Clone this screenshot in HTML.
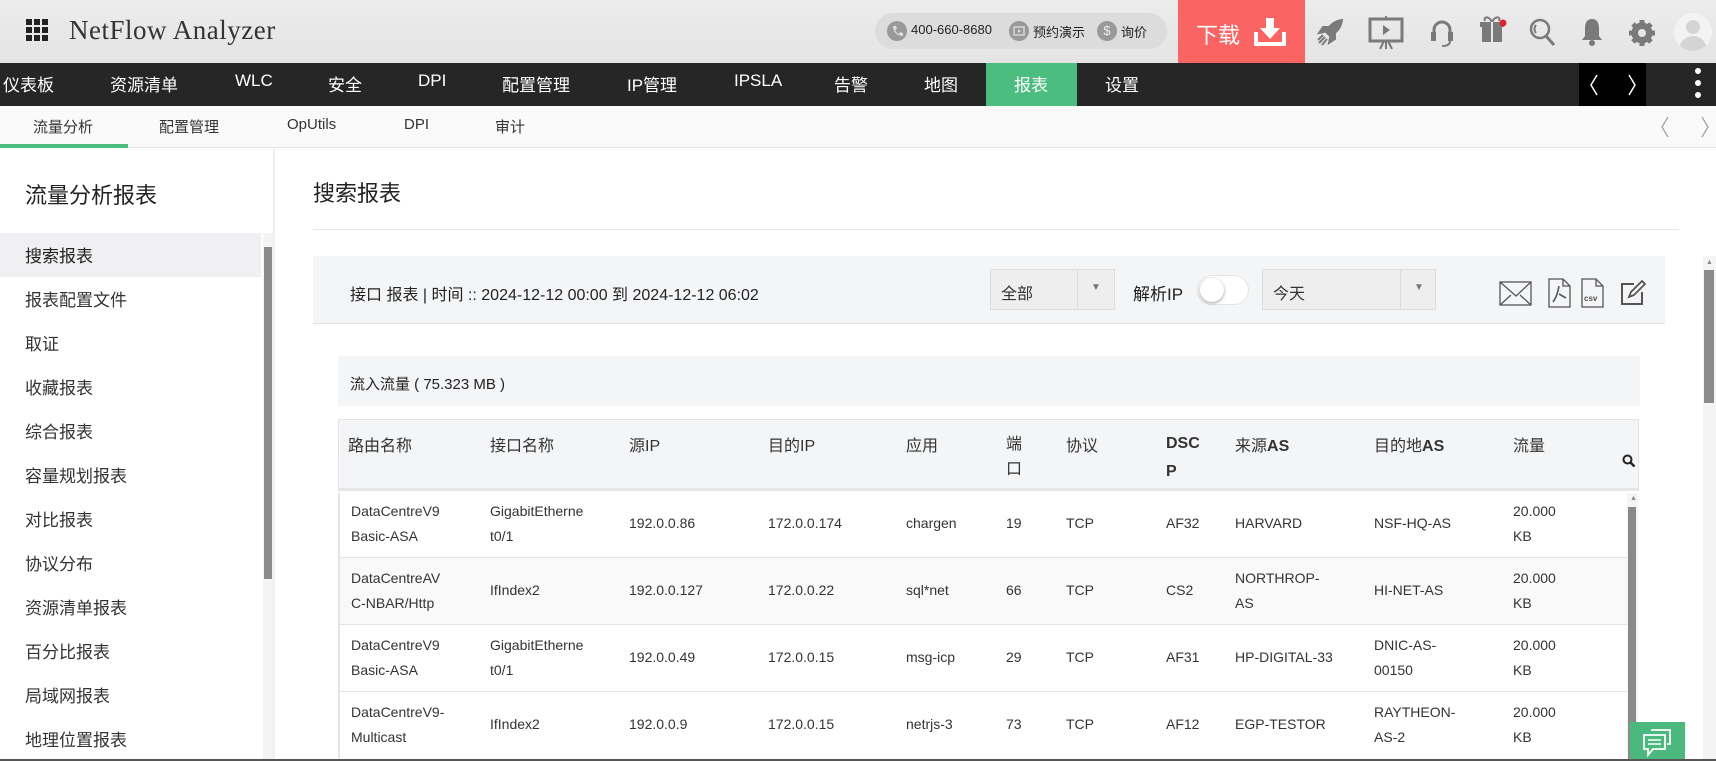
<!DOCTYPE html>
<html><head><meta charset="utf-8">
<style>
*{margin:0;padding:0;box-sizing:border-box}
body{width:1716px;height:761px;overflow:hidden;position:relative;background:#fff;font-family:"Liberation Sans","Noto Sans CJK SC",sans-serif;color:#333}
.a{position:absolute;white-space:nowrap}
#hdr{left:0;top:0;width:1716px;height:63px;background:linear-gradient(#ececec,#e4e4e4)}
#nav{left:0;top:63px;width:1716px;height:43px;background:#262626}
#nav .a{color:#fff;font-size:17px;top:8px}
#sub{left:0;top:106px;width:1716px;height:42px;background:#fafafa;border-bottom:1px solid #e6e6e6}
#sub .a{font-size:15px;top:10px;color:#333}
.side{font-size:17px;color:#333;left:25px}
.th{font-size:16px;color:#333}
.td{font-size:14px;color:#333;line-height:25px}
.ic{fill:#7a7a7a}
</style></head><body>
<div id="hdr" class="a"></div>
<svg class="a" style="left:26px;top:19px" width="22" height="22"><g fill="#222"><rect x="0" y="0" width="6" height="6"/><rect x="8" y="0" width="6" height="6"/><rect x="16" y="0" width="6" height="6"/><rect x="0" y="8" width="6" height="6"/><rect x="8" y="8" width="6" height="6"/><rect x="16" y="8" width="6" height="6"/><rect x="0" y="16" width="6" height="6"/><rect x="8" y="16" width="6" height="6"/><rect x="16" y="16" width="6" height="6"/></g></svg>
<div class="a" style="left:69px;top:15px;font-size:27px;color:#333;font-family:'Liberation Serif',serif;letter-spacing:0.5px">NetFlow Analyzer</div>
<div class="a" style="left:875px;top:13px;width:292px;height:36px;border-radius:18px;background:#dcdcdc"></div>
<div class="a" style="left:887px;top:21px;width:20px;height:20px;border-radius:10px;background:#999"></div>
<svg class="a" style="left:890px;top:24px" width="14" height="14"><path d="M3 2l3 0 1 3-2 1c1 2 2 3 4 4l1-2 3 1v3c-6 0-10-4-10-10z" fill="#ddd"/></svg>
<div class="a" style="left:911px;top:22px;font-size:13px;color:#222">400-660-8680</div>
<div class="a" style="left:1009px;top:21px;width:20px;height:20px;border-radius:10px;background:#999"></div>
<svg class="a" style="left:1013px;top:25px" width="12" height="12"><rect x="1" y="2" width="10" height="8" fill="none" stroke="#ddd" stroke-width="1.4"/><path d="M5 4v4l3-2z" fill="#ddd"/></svg>
<div class="a" style="left:1033px;top:22px;font-size:13px;color:#222">预约演示</div>
<div class="a" style="left:1097px;top:21px;width:20px;height:20px;border-radius:10px;background:#999;color:#eee;font-size:13px;text-align:center;line-height:20px">$</div>
<div class="a" style="left:1121px;top:22px;font-size:13px;color:#222">询价</div>
<div class="a" style="left:1178px;top:0;width:127px;height:63px;background:#fa6462"></div>
<div class="a" style="left:1196px;top:18px;font-size:22px;color:#fff">下载</div>
<svg class="a" style="left:1254px;top:16px" width="32" height="30"><path d="M2 16v12h28V16" stroke="#fff" stroke-width="4" fill="none"/><path d="M12 2h8v10h6l-10 11-10-11h6z" fill="#fff"/></svg>
<svg class="a" style="left:1316px;top:18px" width="28" height="28"><path class="ic" d="M26 2c-8 1-13 6-16 12l4 4c6-3 11-8 12-16zM8 14l-5 1 4-6 6 0zM14 20l-1 5 6-4 0-6zM9 19l-6 6M11 21l-5 6M7 17l-5 5" stroke="#7a7a7a" stroke-width="2"/></svg>
<svg class="a" style="left:1368px;top:16px" width="36" height="34"><rect x="2" y="3" width="32" height="22" fill="none" stroke="#7a7a7a" stroke-width="3"/><path d="M15 9v10l7-5z" class="ic"/><path d="M18 0v3M18 25v8M12 33l4-8M24 33l-4-8" stroke="#7a7a7a" stroke-width="2"/></svg>
<svg class="a" style="left:1429px;top:18px" width="26" height="30"><path d="M5 16v-4a8 8 0 0116 0v4" stroke="#7a7a7a" stroke-width="3" fill="none"/><rect x="2" y="14" width="5" height="9" class="ic"/><rect x="19" y="14" width="5" height="9" class="ic"/><path d="M21 23c0 4-4 5-8 5" stroke="#7a7a7a" stroke-width="2" fill="none"/></svg>
<svg class="a" style="left:1479px;top:14px" width="28" height="30"><rect x="3" y="12" width="20" height="16" class="ic"/><rect x="1" y="8" width="24" height="5" class="ic"/><path d="M13 8c-3-6-9-6-7-1M13 8c3-6 9-6 7-1" stroke="#7a7a7a" stroke-width="2" fill="none"/><rect x="12" y="8" width="2" height="20" fill="#e8e8e8"/><circle cx="24" cy="9" r="3.5" fill="#e0222a"/></svg>
<svg class="a" style="left:1529px;top:18px" width="28" height="30"><circle cx="11" cy="11" r="9" fill="none" stroke="#7a7a7a" stroke-width="2.5"/><path d="M17 18l8 9" stroke="#7a7a7a" stroke-width="3"/><path d="M7 7a6 6 0 000 8" stroke="#7a7a7a" stroke-width="2" fill="none"/></svg>
<svg class="a" style="left:1580px;top:17px" width="24" height="30"><path class="ic" d="M12 2c-5 0-7 4-7 9v8l-3 4h20l-3-4v-8c0-5-2-9-7-9z"/><circle cx="12" cy="26" r="3" class="ic"/></svg>
<svg class="a" style="left:1628px;top:19px" width="28" height="28"><g transform="translate(14 14)"><circle r="8" fill="none" stroke="#7a7a7a" stroke-width="5"/><g stroke="#7a7a7a" stroke-width="5"><path d="M0-13V13M-13 0H13M-9-9L9 9M-9 9L9-9"/></g><circle r="4" fill="#e6e6e6"/></g></svg>
<div class="a" style="left:1674px;top:13px;width:38px;height:38px;border-radius:19px;background:#f3f3f3;overflow:hidden"><div class="a" style="left:12px;top:7px;width:14px;height:14px;border-radius:7px;background:#d4d4d4"></div><div class="a" style="left:5px;top:23px;width:28px;height:22px;border-radius:14px 14px 0 0;background:#d4d4d4"></div></div>

<div id="nav" class="a">
<div class="a" style="left:3px">仪表板</div><div class="a" style="left:110px">资源清单</div><div class="a" style="left:235px">WLC</div><div class="a" style="left:328px">安全</div><div class="a" style="left:418px">DPI</div><div class="a" style="left:502px">配置管理</div><div class="a" style="left:627px">IP管理</div><div class="a" style="left:734px">IPSLA</div><div class="a" style="left:834px">告警</div><div class="a" style="left:924px">地图</div>
<div class="a" style="left:986px;top:0;width:91px;height:43px;background:#4bbd7f"></div><div class="a" style="left:1014px">报表</div>
<div class="a" style="left:1105px">设置</div>
<div class="a" style="left:1579px;top:0;width:67px;height:43px;background:#000"></div>
<svg class="a" style="left:1588px;top:11px" width="50" height="22"><path d="M9 1L3 11l6 10M41 1l6 10-6 10" stroke="#fff" stroke-width="1.5" fill="none"/></svg>
<div class="a" style="left:1695px;top:5px;width:6px;height:6px;border-radius:3px;background:#fff"></div><div class="a" style="left:1695px;top:17px;width:6px;height:6px;border-radius:3px;background:#fff"></div><div class="a" style="left:1695px;top:29px;width:6px;height:6px;border-radius:3px;background:#fff"></div>
</div>

<div id="sub" class="a">
<div class="a" style="left:33px">流量分析</div><div class="a" style="left:159px">配置管理</div><div class="a" style="left:287px">OpUtils</div><div class="a" style="left:404px">DPI</div><div class="a" style="left:495px">审计</div>
<div class="a" style="left:0;top:38px;width:128px;height:4px;background:#4bbd7f"></div>
<svg class="a" style="left:1660px;top:10px" width="50" height="22"><path d="M8 1L2 11l6 10M42 1l6 10-6 10" stroke="#999" stroke-width="1.2" fill="none"/></svg>
</div>

<!-- sidebar -->
<div class="a" style="left:273px;top:149px;width:2px;height:612px;background:#f0f0f0"></div>
<div class="a" style="left:25px;top:178px;font-size:22px;color:#222">流量分析报表</div>
<div class="a" style="left:0;top:233px;width:261px;height:44px;background:#f0f0f2"></div>
<div class="a side" style="top:242px;color:#222">搜索报表</div>
<div class="a side" style="top:286px">报表配置文件</div>
<div class="a side" style="top:330px">取证</div>
<div class="a side" style="top:374px">收藏报表</div>
<div class="a side" style="top:418px">综合报表</div>
<div class="a side" style="top:462px">容量规划报表</div>
<div class="a side" style="top:506px">对比报表</div>
<div class="a side" style="top:550px">协议分布</div>
<div class="a side" style="top:594px">资源清单报表</div>
<div class="a side" style="top:638px">百分比报表</div>
<div class="a side" style="top:682px">局域网报表</div>
<div class="a side" style="top:726px">地理位置报表</div>
<div class="a" style="left:263px;top:233px;width:10px;height:528px;background:#f4f4f4"></div>
<div class="a" style="left:264px;top:247px;width:8px;height:332px;background:#8a8a8a"></div>

<!-- main -->
<div class="a" style="left:313px;top:176px;font-size:22px;color:#222">搜索报表</div>
<div class="a" style="left:313px;top:229px;width:1366px;height:1px;background:#e6e6e6"></div>
<div class="a" style="left:313px;top:256px;width:1352px;height:68px;background:#f4f5f7;border-bottom:1px solid #e2e2e2"></div>
<div class="a" style="left:350px;top:281px;font-size:16px;color:#222">接口 报表 | 时间 :: 2024-12-12 00:00 到 2024-12-12 06:02</div>
<div class="a" style="left:990px;top:269px;width:125px;height:41px;background:#eee;border:1px solid #ddd"><div class="a" style="left:10px;top:10px;font-size:16px">全部</div><div class="a" style="left:86px;top:0;width:1px;height:39px;background:#ddd"></div><div class="a" style="left:100px;top:12px;font-size:10px;color:#777">▼</div></div>
<div class="a" style="left:1133px;top:280px;font-size:17px;color:#222">解析IP</div>
<div class="a" style="left:1197px;top:275px;width:52px;height:30px;border-radius:15px;background:#fff;border:1px solid #e4e4e4"><div class="a" style="left:2px;top:2px;width:24px;height:24px;border-radius:12px;background:#fff;box-shadow:0 1px 3px #999"></div></div>
<div class="a" style="left:1262px;top:269px;width:174px;height:41px;background:#eee;border:1px solid #ddd"><div class="a" style="left:10px;top:10px;font-size:16px">今天</div><div class="a" style="left:137px;top:0;width:1px;height:39px;background:#ddd"></div><div class="a" style="left:151px;top:12px;font-size:10px;color:#777">▼</div></div>
<svg class="a" style="left:1499px;top:281px" width="34" height="26"><rect x="1" y="1" width="31" height="23" fill="none" stroke="#555" stroke-width="1.3"/><path d="M1 1l16 14L32 1M1 24l11-10M32 24L21 14" stroke="#555" stroke-width="1.3" fill="none"/></svg>
<svg class="a" style="left:1548px;top:278px" width="24" height="30"><path d="M1 1h14l7 7v21H1z" fill="none" stroke="#555" stroke-width="1.3"/><path d="M15 1v7h7" fill="none" stroke="#555" stroke-width="1.3"/><path d="M11 8c-1 6 -3 12-6 16M11 16l7 4" stroke="#555" stroke-width="1.6" fill="none"/></svg>
<svg class="a" style="left:1581px;top:278px" width="24" height="30"><path d="M1 1h14l7 7v21H1z" fill="none" stroke="#555" stroke-width="1.3"/><path d="M15 1v7h7" fill="none" stroke="#555" stroke-width="1.3"/><text x="3" y="23" font-size="8" font-family="Liberation Sans" font-weight="bold" fill="#555">csv</text></svg>
<svg class="a" style="left:1620px;top:280px" width="26" height="26"><path d="M14 4H2v20h20V12" fill="none" stroke="#555" stroke-width="2"/><path d="M9 17l2-5 11-11 3 3-11 11z" fill="none" stroke="#555" stroke-width="1.8"/></svg>

<div class="a" style="left:338px;top:356px;width:1302px;height:50px;background:#f4f5f7"></div>
<div class="a" style="left:350px;top:373px;font-size:15px;color:#222">流入流量 ( 75.323 MB )</div>

<div class="a" style="left:338px;top:419px;width:1301px;height:72px;background:#f4f5f7;border:1px solid #e4e4e4;border-bottom:3px solid #e6e6e6"></div>
<div class="a th" style="left:348px;top:432px">路由名称</div>
<div class="a th" style="left:490px;top:432px">接口名称</div>
<div class="a th" style="left:629px;top:432px">源IP</div>
<div class="a th" style="left:768px;top:432px">目的IP</div>
<div class="a th" style="left:906px;top:432px">应用</div>
<div class="a th" style="left:1006px;top:432px;line-height:25px;white-space:normal;width:20px">端口</div>
<div class="a th" style="left:1066px;top:432px">协议</div>
<div class="a th" style="left:1166px;top:430px;line-height:28px;white-space:normal;width:38px;font-weight:bold">DSC P</div>
<div class="a th" style="left:1235px;top:432px">来源<b>AS</b></div>
<div class="a th" style="left:1374px;top:432px">目的地<b>AS</b></div>
<div class="a th" style="left:1513px;top:432px">流量</div>
<svg class="a" style="left:1622px;top:454px" width="14" height="14"><circle cx="5.5" cy="5.5" r="4" fill="none" stroke="#222" stroke-width="2"/><path d="M8.5 8.5l4 4" stroke="#222" stroke-width="2.4"/></svg>

<div class="a" style="left:338px;top:493px;width:2px;height:268px;background:#e4e4e4"></div>
<div class="a" style="left:340px;top:557px;width:1287px;height:67px;background:#f9f9f9"></div>
<div class="a" style="left:340px;top:557px;width:1287px;height:1px;background:#e4e4e4"></div>
<div class="a" style="left:340px;top:624px;width:1287px;height:1px;background:#e4e4e4"></div>
<div class="a" style="left:340px;top:691px;width:1287px;height:1px;background:#e4e4e4"></div>

<!-- rows -->
<div class="a td" style="left:351px;top:499px">DataCentreV9<br>Basic-ASA</div>
<div class="a td" style="left:490px;top:499px">GigabitEtherne<br>t0/1</div>
<div class="a td" style="left:629px;top:511px">192.0.0.86</div>
<div class="a td" style="left:768px;top:511px">172.0.0.174</div>
<div class="a td" style="left:906px;top:511px">chargen</div>
<div class="a td" style="left:1006px;top:511px">19</div>
<div class="a td" style="left:1066px;top:511px">TCP</div>
<div class="a td" style="left:1166px;top:511px">AF32</div>
<div class="a td" style="left:1235px;top:511px">HARVARD</div>
<div class="a td" style="left:1374px;top:511px">NSF-HQ-AS</div>
<div class="a td" style="left:1513px;top:499px">20.000<br>KB</div>

<div class="a td" style="left:351px;top:566px">DataCentreAV<br>C-NBAR/Http</div>
<div class="a td" style="left:490px;top:578px">IfIndex2</div>
<div class="a td" style="left:629px;top:578px">192.0.0.127</div>
<div class="a td" style="left:768px;top:578px">172.0.0.22</div>
<div class="a td" style="left:906px;top:578px">sql*net</div>
<div class="a td" style="left:1006px;top:578px">66</div>
<div class="a td" style="left:1066px;top:578px">TCP</div>
<div class="a td" style="left:1166px;top:578px">CS2</div>
<div class="a td" style="left:1235px;top:566px">NORTHROP-<br>AS</div>
<div class="a td" style="left:1374px;top:578px">HI-NET-AS</div>
<div class="a td" style="left:1513px;top:566px">20.000<br>KB</div>

<div class="a td" style="left:351px;top:633px">DataCentreV9<br>Basic-ASA</div>
<div class="a td" style="left:490px;top:633px">GigabitEtherne<br>t0/1</div>
<div class="a td" style="left:629px;top:645px">192.0.0.49</div>
<div class="a td" style="left:768px;top:645px">172.0.0.15</div>
<div class="a td" style="left:906px;top:645px">msg-icp</div>
<div class="a td" style="left:1006px;top:645px">29</div>
<div class="a td" style="left:1066px;top:645px">TCP</div>
<div class="a td" style="left:1166px;top:645px">AF31</div>
<div class="a td" style="left:1235px;top:645px">HP-DIGITAL-33</div>
<div class="a td" style="left:1374px;top:633px">DNIC-AS-<br>00150</div>
<div class="a td" style="left:1513px;top:633px">20.000<br>KB</div>

<div class="a td" style="left:351px;top:700px">DataCentreV9-<br>Multicast</div>
<div class="a td" style="left:490px;top:712px">IfIndex2</div>
<div class="a td" style="left:629px;top:712px">192.0.0.9</div>
<div class="a td" style="left:768px;top:712px">172.0.0.15</div>
<div class="a td" style="left:906px;top:712px">netrjs-3</div>
<div class="a td" style="left:1006px;top:712px">73</div>
<div class="a td" style="left:1066px;top:712px">TCP</div>
<div class="a td" style="left:1166px;top:712px">AF12</div>
<div class="a td" style="left:1235px;top:712px">EGP-TESTOR</div>
<div class="a td" style="left:1374px;top:700px">RAYTHEON-<br>AS-2</div>
<div class="a td" style="left:1513px;top:700px">20.000<br>KB</div>

<div class="a" style="left:1627px;top:493px;width:11px;height:268px;background:#f4f4f4"></div>
<div class="a" style="left:1628px;top:507px;width:8px;height:254px;background:#8a8a8a"></div>
<div class="a" style="left:1630px;top:495px;font-size:7px;color:#888">▲</div>

<div class="a" style="left:1703px;top:256px;width:13px;height:505px;background:#f4f4f4"></div>
<div class="a" style="left:1704px;top:270px;width:10px;height:133px;background:#8a8a8a"></div>
<div class="a" style="left:1706px;top:259px;font-size:7px;color:#888">▲</div>

<div class="a" style="left:1630px;top:722px;width:55px;height:39px;background:#4bb97e"></div>
<svg class="a" style="left:1641px;top:727px" width="34" height="32"><path d="M10 3h19v14h-3" fill="none" stroke="#fff" stroke-width="1.8"/><path d="M3 8h21v14H12l-5 6v-6H3z" fill="none" stroke="#fff" stroke-width="1.8"/><path d="M7 13h13M7 17h13" stroke="#fff" stroke-width="1.5"/></svg>
<div class="a" style="left:0;top:759px;width:1716px;height:2px;background:#555"></div>
</body></html>
